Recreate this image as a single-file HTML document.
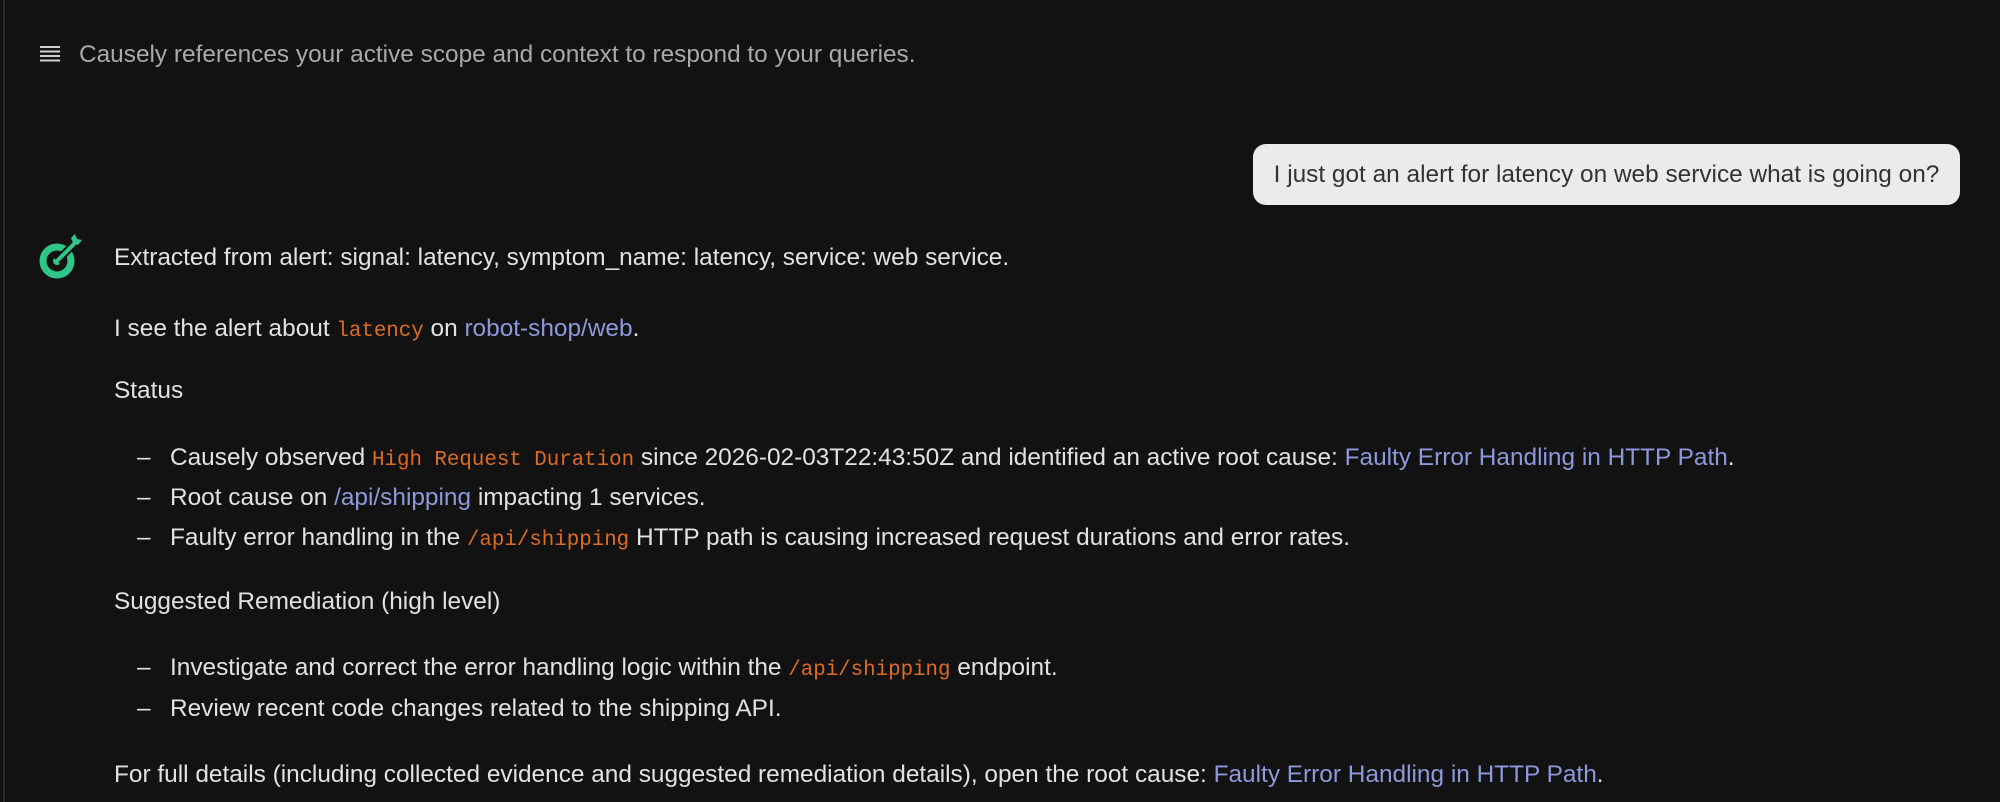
<!DOCTYPE html>
<html><head><meta charset="utf-8"><style>
html,body{margin:0;padding:0;width:2000px;height:802px;overflow:hidden;background:#121212;}
body{font-family:"Liberation Sans",sans-serif;color:#e2e2e2;font-size:24.4px;position:relative;}
.l{position:absolute;white-space:nowrap;line-height:26px;}
.c{font-family:"Liberation Mono",monospace;color:#dd6c22;font-size:20.8px;}
.a{color:#8e98dc;}
.edge{position:absolute;left:3px;top:0;width:2px;height:802px;background:#2a2a2a;}
.bub{position:absolute;left:1253px;top:144px;width:707px;height:61px;background:#ebebeb;border-radius:13px;color:#333;line-height:61px;text-align:center;font-size:24.4px;}
</style></head><body>
<div class="edge"></div>
<svg style="position:absolute;left:40px;top:46px" width="20" height="16" viewBox="0 0 20 16"><g fill="#cfcfcf"><rect x="0" y="0" width="20" height="2"/><rect x="0" y="4.5" width="20" height="2"/><rect x="0" y="9" width="20" height="2"/><rect x="0" y="13.5" width="20" height="2"/></g></svg>
<div class="l" style="left:79px;top:42px;color:#a9a9a9;">Causely references your active scope and context to respond to your queries.</div>
<div class="bub">I just got an alert for latency on web service what is going on?</div>
<svg style="position:absolute;left:38px;top:234px" width="46" height="46" viewBox="0 0 46 46">
<circle cx="19" cy="27" r="14" fill="none" stroke="#2fc68a" stroke-width="7"/>
<circle cx="19" cy="27" r="4" fill="#2fc68a"/>
<path d="M19 27 L36 10" stroke="#121212" stroke-width="8"/>
<path d="M19 27 L36 10" stroke="#2fc68a" stroke-width="4" stroke-linecap="round"/>
<path d="M33 4 L35 9 L40 11 L44 6 L39 5 L37 0 Z" fill="#2fc68a"/>
</svg>
<div class="l" style="left:114px;top:245px;">Extracted from alert: signal: latency, symptom_name: latency, service: web service.</div>
<div class="l" style="left:114px;top:316px;">I see the alert about <span class="c">latency</span> on <span class="a">robot-shop/web</span>.</div>
<div class="l" style="left:114px;top:378px;">Status</div>
<div class="l" style="left:137px;top:445px;">–</div>
<div class="l" style="left:170px;top:445px;">Causely observed <span class="c">High Request Duration</span> since 2026-02-03T22:43:50Z and identified an active root cause: <span class="a">Faulty Error Handling in HTTP Path</span>.</div>
<div class="l" style="left:137px;top:485px;">–</div>
<div class="l" style="left:170px;top:485px;">Root cause on <span class="a">/api/shipping</span> impacting 1 services.</div>
<div class="l" style="left:137px;top:525px;">–</div>
<div class="l" style="left:170px;top:525px;">Faulty error handling in the <span class="c">/api/shipping</span> HTTP path is causing increased request durations and error rates.</div>
<div class="l" style="left:114px;top:589px;">Suggested Remediation (high level)</div>
<div class="l" style="left:137px;top:655px;">–</div>
<div class="l" style="left:170px;top:655px;">Investigate and correct the error handling logic within the <span class="c">/api/shipping</span> endpoint.</div>
<div class="l" style="left:137px;top:696px;">–</div>
<div class="l" style="left:170px;top:696px;">Review recent code changes related to the shipping API.</div>
<div class="l" style="left:114px;top:762px;">For full details (including collected evidence and suggested remediation details), open the root cause: <span class="a">Faulty Error Handling in HTTP Path</span>.</div>
</body></html>
